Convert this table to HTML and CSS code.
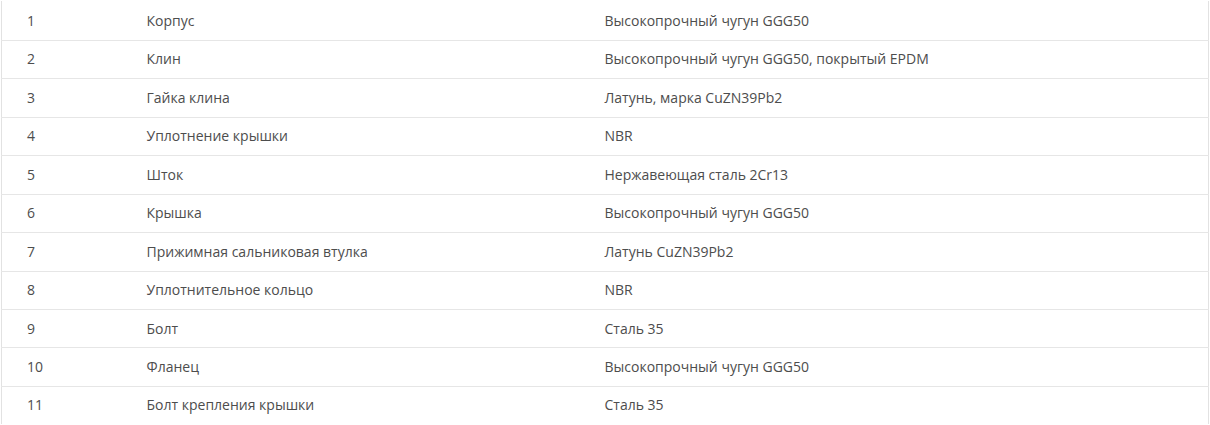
FILE: index.html
```html
<!DOCTYPE html>
<html lang="ru">
<head>
<meta charset="utf-8">
<link rel="stylesheet" href="styles.css">
</head>
<body>
<div class="wrap">
<table class="spec">
<colgroup><col class="c1"><col class="c2"><col class="c3"></colgroup>
<tbody>
<tr><td>1</td><td>Корпус</td><td>Высокопрочный чугун GGG50</td></tr>
<tr><td>2</td><td>Клин</td><td>Высокопрочный чугун GGG50, покрытый EPDM</td></tr>
<tr><td>3</td><td>Гайка клина</td><td>Латунь, марка CuZN39Pb2</td></tr>
<tr><td>4</td><td>Уплотнение крышки</td><td>NBR</td></tr>
<tr><td>5</td><td>Шток</td><td>Нержавеющая сталь 2Cr13</td></tr>
<tr><td>6</td><td>Крышка</td><td>Высокопрочный чугун GGG50</td></tr>
<tr><td>7</td><td>Прижимная сальниковая втулка</td><td>Латунь CuZN39Pb2</td></tr>
<tr><td>8</td><td>Уплотнительное кольцо</td><td>NBR</td></tr>
<tr><td>9</td><td>Болт</td><td>Сталь 35</td></tr>
<tr><td>10</td><td>Фланец</td><td>Высокопрочный чугун GGG50</td></tr>
<tr><td>11</td><td>Болт крепления крышки</td><td>Сталь 35</td></tr>
</tbody>
</table>
</div>
</body>
</html>
```

FILE: styles.css
```css
html, body {
  margin: 0;
  padding: 0;
  background: #fff;
}
body {
  font-family: "Open Sans", "Liberation Sans", sans-serif;
  font-size: 14px;
  color: #4d4d4d;
  overflow: hidden;
}
.wrap {
  padding-left: 1px;
  width: 1209px;
  margin-top: 1px;
}
.spec {
  width: 1208px;
  border-collapse: collapse;
  border-left: 1px solid #e2e2e2;
  border-right: 1px solid #e2e2e2;
  table-layout: fixed;
}
.c1 { width: 117px; }
.c2 { width: 459px; }
.c3 { width: auto; }
.spec td {
  padding: 7.5px 8px 8.5px 27px;
  line-height: 21.44px;
  border-top: 1px solid #e6e6e6;
  vertical-align: middle;
  white-space: nowrap;
}
.spec td:first-child {
  padding-left: 25px;
}
.spec td:nth-child(2) {
  padding-left: 28px;
}
.spec tr:first-child td {
  border-top: none;
  padding-top: 9px;
}
```
